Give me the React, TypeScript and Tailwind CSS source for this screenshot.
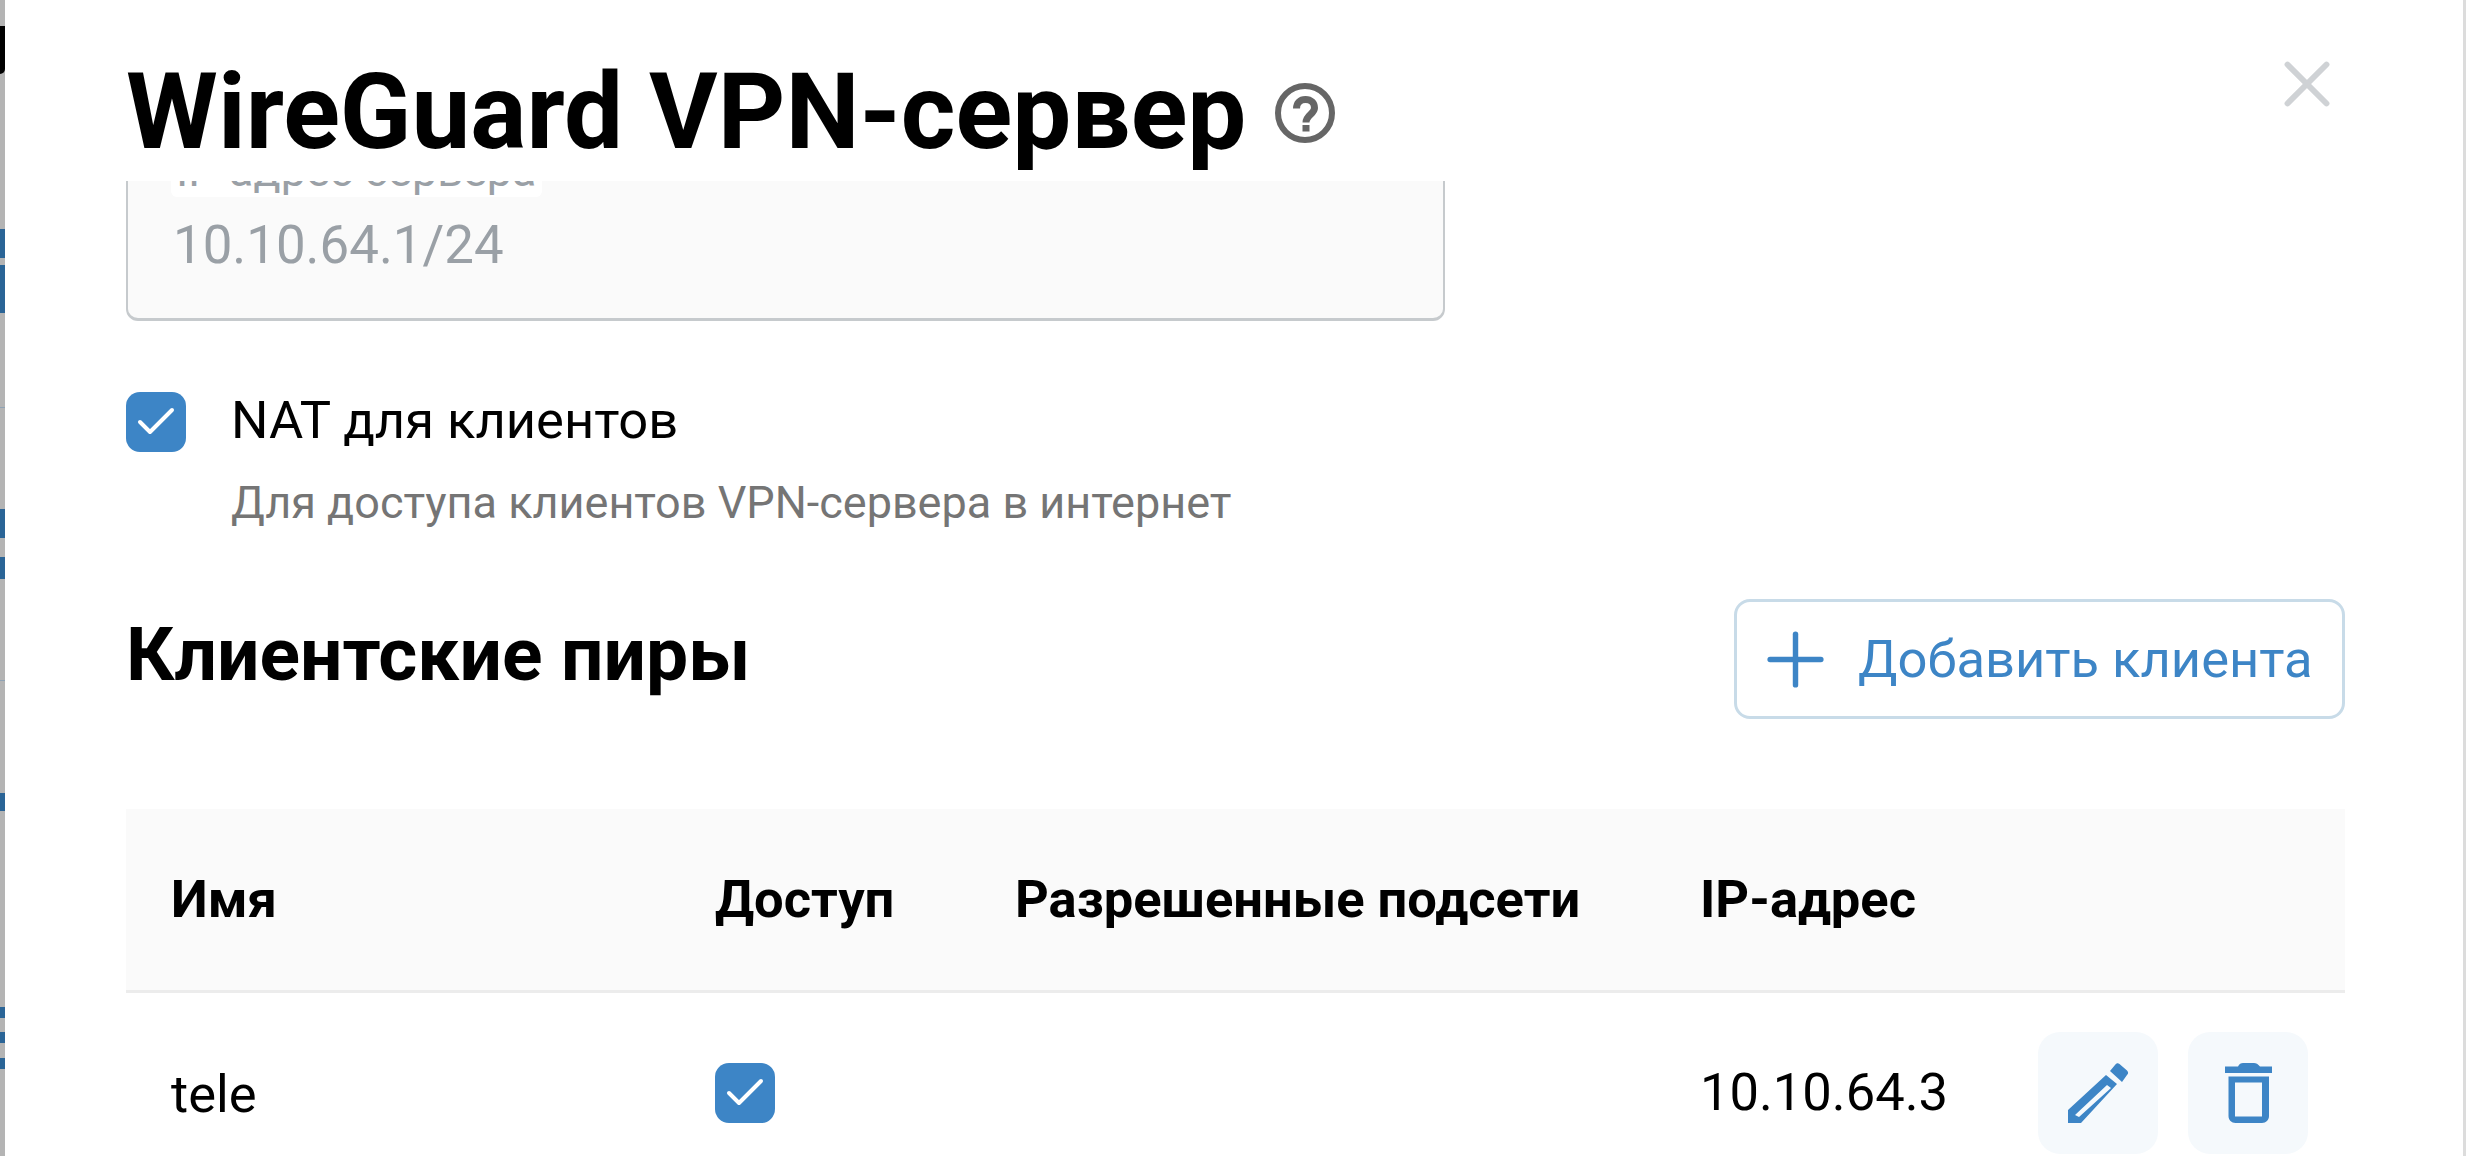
import { Check, X, Plus } from 'lucide-react';

function CheckMark() {
  return (
    <span className="flex h-[60px] w-[60px] shrink-0 items-center justify-center rounded-[14px] bg-[#3d85c6]">
      <Check className="h-[48px] w-[48px] text-white" strokeWidth={2} />
    </span>
  );
}

function HelpIcon() {
  return (
    <svg viewBox="0 0 60 60" className="h-[60px] w-[60px] shrink-0" fill="none">
      <circle cx="30" cy="30" r="27" stroke="#666666" strokeWidth="6" />
      <path d="M21.500 25.500C21.500 20 25 16.500 30.500 16.500S39.500 20 39.500 25C39.500 31 31 32 31 39.500" stroke="#666666" strokeWidth="7" />
      <rect x="27.500" y="42" width="7" height="6.500" fill="#666666" />
    </svg>
  );
}

function PencilIcon() {
  return (
    <svg viewBox="0 0 61 60" className="h-[60px] w-[61px]" fill="#3d85c6">
      <path fillRule="evenodd" d="M0 60V47L38 12 49 21 13 60ZM7 52 11 54 43 25 39 22Z" />
      <path d="M42 8 47 2C48.500 0 50 0 51.500 1L59 7.500C60.500 9 60.500 10.500 59 12L54 19Z" />
    </svg>
  );
}

function TrashIcon() {
  return (
    <svg viewBox="0 0 47 60" className="h-[60px] w-[47px]" fill="#3d85c6">
      <path d="M0 10V3.500H13C14 1 16 0 18 0H29C31 0 33 1 35 3.500H47V10Z" />
      <path
        fillRule="evenodd"
        d="M3.500 13.500H44V53C44 57 41 60 37 60H10.500C6.500 60 3.500 57 3.500 53ZM10 19.500V53.500H37V19.500Z"
      />
    </svg>
  );
}

function EdgeStrip() {
  return (
    <div className="flex w-[5px] shrink-0 flex-col bg-[#b4b4b4]">
      <div className="mt-[26px] h-[48px] rounded-br-[5px] bg-black" />
      <div className="mt-[155px] h-[29px] bg-[#2a6496]" />
      <div className="mt-[7px] h-[48px] bg-[#2a6496]" />
      <div className="mt-[94px] h-px bg-[#8fa3b5]" />
      <div className="mt-[101px] h-[29px] bg-[#2a6496]" />
      <div className="mt-[19px] h-[22px] bg-[#2a6496]" />
      <div className="mt-[101px] h-px bg-[#8fa3b5]" />
      <div className="mt-[112px] h-[18px] bg-[#2a6496]" />
      <div className="mt-[196px] h-[11px] bg-[#2a6496]" />
      <div className="mt-[14px] h-[11px] bg-[#2a6496]" />
      <div className="mt-[15px] h-[11px] bg-[#2a6496]" />
    </div>
  );
}

export default function App() {
  return (
    <div className="flex h-screen w-full overflow-hidden bg-white font-[Roboto,sans-serif] text-black">
      <EdgeStrip />
      <main className="flex min-w-0 flex-1 flex-col">
        <header className="flex h-[181px] shrink-0 items-start justify-between pl-[121px] pr-[117px]">
          <div className="flex items-center gap-[29px] pt-[52px]">
            <h1 className="text-[105px] leading-[122px] font-bold">WireGuard VPN-сервер</h1>
            <HelpIcon />
          </div>
          <button type="button" className="mt-[45px] text-[#cfd2d5]">
            <X className="h-[78px] w-[78px]" strokeWidth={1.8} />
          </button>
        </header>

        <section className="min-h-0 flex-1 overflow-hidden pl-[121px] pr-[118px]">
          <div className="relative -mt-[31px] h-[171px] w-[1319px] rounded-[12px] border-2 border-b-[3px] border-[#c6cacd] bg-[#fafafa] pl-[45px] pt-[63px]">
            <span className="absolute -top-[5px] left-[43px] h-[50px] rounded-[6px] bg-white px-[5px] text-[45px] leading-[47px] text-[#9aa0a6]">
              IP-адрес сервера
            </span>
            <div className="text-[52.800px] leading-[60px] text-[#9aa0a6]">10.10.64.1/24</div>
          </div>

          <div className="mt-[71px] flex gap-[45px]">
            <CheckMark />
            <div className="-mt-[2px]">
              <div className="text-[52.500px] leading-[60px]">NAT для клиентов</div>
              <div className="mt-[27px] text-[45px] leading-[52px] text-[#757575]">
                Для доступа клиентов VPN-сервера в интернет
              </div>
            </div>
          </div>

          <div className="mt-[70px] flex items-center justify-between">
            <h2 className="pb-[10px] text-[75px] leading-[84px] font-bold">Клиентские пиры</h2>
            <button
              type="button"
              className="flex h-[120px] w-[611px] items-center gap-[19px] rounded-[16px] border-[3px] border-[#c8dbe8] pl-[15px] text-[52.500px] text-[#3d85c6]"
            >
              <Plus className="h-[87px] w-[87px]" strokeWidth={1.5} />
              Добавить клиента
            </button>
          </div>

          <table className="mt-[90px] w-full table-fixed border-collapse">
            <thead>
              <tr className="h-[182px] border-b-[3px] border-[#ececec] bg-[#fafafa] text-left text-[52.500px]">
                <th className="w-[589px] pl-[45px] font-bold">Имя</th>
                <th className="w-[300px] font-bold">Доступ</th>
                <th className="w-[685px] font-bold">Разрешенные подсети</th>
                <th className="font-bold">IP-адрес</th>
              </tr>
            </thead>
            <tbody>
              <tr className="text-[52.500px]">
                <td className="pl-[45px] pt-[43px]">tele</td>
                <td className="pt-[39px]">
                  <CheckMark />
                </td>
                <td />
                <td className="pt-[39px]">
                  <div className="flex items-center justify-between pr-[37px]">
                    <span>10.10.64.3</span>
                    <div className="flex gap-[30px]">
                      <button type="button" className="flex h-[122px] w-[120px] items-center justify-center rounded-[22px] bg-[#f5f9fc]">
                        <PencilIcon />
                      </button>
                      <button type="button" className="flex h-[122px] w-[120px] items-center justify-center rounded-[22px] bg-[#f5f9fc]">
                        <TrashIcon />
                      </button>
                    </div>
                  </div>
                </td>
              </tr>
            </tbody>
          </table>
        </section>
      </main>
      <div className="w-[3px] shrink-0 bg-[#dcdcdc]" />
    </div>
  );
}
